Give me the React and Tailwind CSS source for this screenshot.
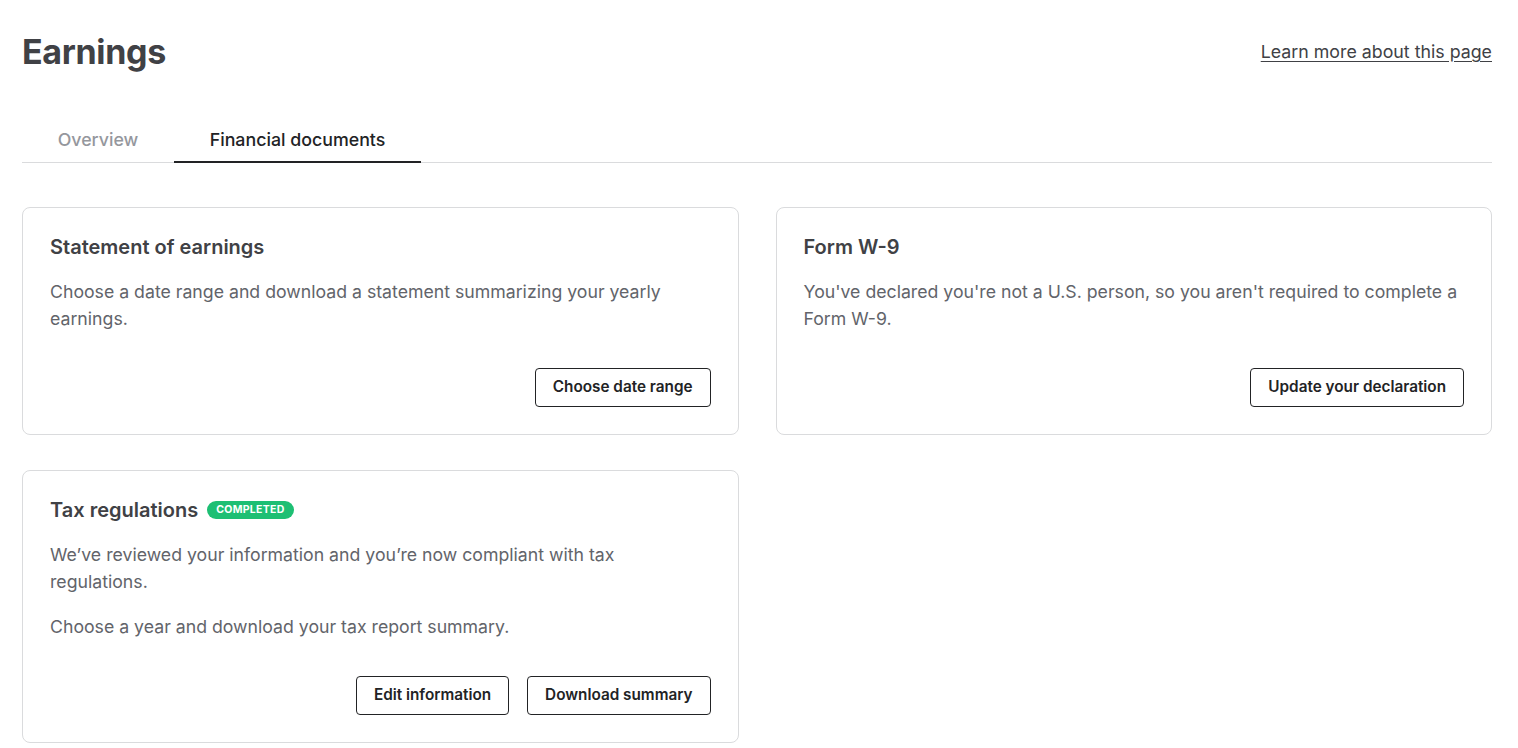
const cards = {
  statement: {
    title: "Statement of earnings",
    body: ["Choose a date range and download a statement summarizing your yearly earnings."],
    actions: ["Choose date range"],
  },
  w9: {
    title: "Form W-9",
    body: ["You've declared you're not a U.S. person, so you aren't required to complete a Form W-9."],
    actions: ["Update your declaration"],
  },
  tax: {
    title: "Tax regulations",
    badge: "Completed",
    body: [
      "We’ve reviewed your information and you’re now compliant with tax regulations.",
      "Choose a year and download your tax report summary.",
    ],
    actions: ["Edit information", "Download summary"],
  },
};

function DocCard({ title, badge, body, actions }) {
  return (
    <div className="flex flex-col rounded-lg border border-[#dadbdd] bg-white px-[27px] pt-[24px] pb-[27px]">
      <div className="flex items-center gap-[9px]">
        <h2 className="text-[20px] font-semibold leading-[30px] text-[#404145]">{title}</h2>
        {badge && (
          <span className="rounded-full bg-[#1dbf73] px-[9px] py-[2px] text-[10.5px] font-bold uppercase leading-[14px] tracking-[0.03em] text-white">
            {badge}
          </span>
        )}
      </div>
      <div className="mt-[16px] flex flex-col gap-[18px]">
        {body.map((text) => (
          <p key={text} className="text-[17.7px] leading-[27px] text-[#62646a]">
            {text}
          </p>
        ))}
      </div>
      <div className="mt-[36px] flex justify-end gap-[18px]">
        {actions.map((label) => (
          <button
            key={label}
            type="button"
            className="h-[39px] rounded-[4px] border border-[#222325] bg-white px-[17px] text-[15.3px] font-semibold text-[#222325]"
          >
            {label}
          </button>
        ))}
      </div>
    </div>
  );
}

export default function App() {
  return (
    <div className="min-h-screen bg-white pl-[22px] pr-[26px] pt-[28px] font-['Inter','Liberation_Sans',sans-serif] antialiased">
      <div className="flex items-start justify-between">
        <h1 className="text-[34px] font-bold leading-[48px] tracking-[-0.01em] text-[#404145]">Earnings</h1>
        <a href="#" className="mt-[11px] text-[17.8px] text-[#404145] underline underline-offset-[3px]">
          Learn more about this page
        </a>
      </div>

      <div className="mt-[51px] flex border-b border-[#dadbdd]">
        <button type="button" className="w-[152px] pb-[8px] text-[17.8px] font-medium text-[#95979d]">
          Overview
        </button>
        <button
          type="button"
          className="-mb-px w-[247px] border-b-2 border-[#222325] pb-[7px] text-[17.8px] font-medium text-[#222325]"
        >
          Financial documents
        </button>
      </div>

      <div className="mt-[44px] grid grid-cols-2 items-start gap-x-[37px] gap-y-[35px]">
        <DocCard {...cards.statement} />
        <DocCard {...cards.w9} />
        <DocCard {...cards.tax} />
      </div>
    </div>
  );
}
